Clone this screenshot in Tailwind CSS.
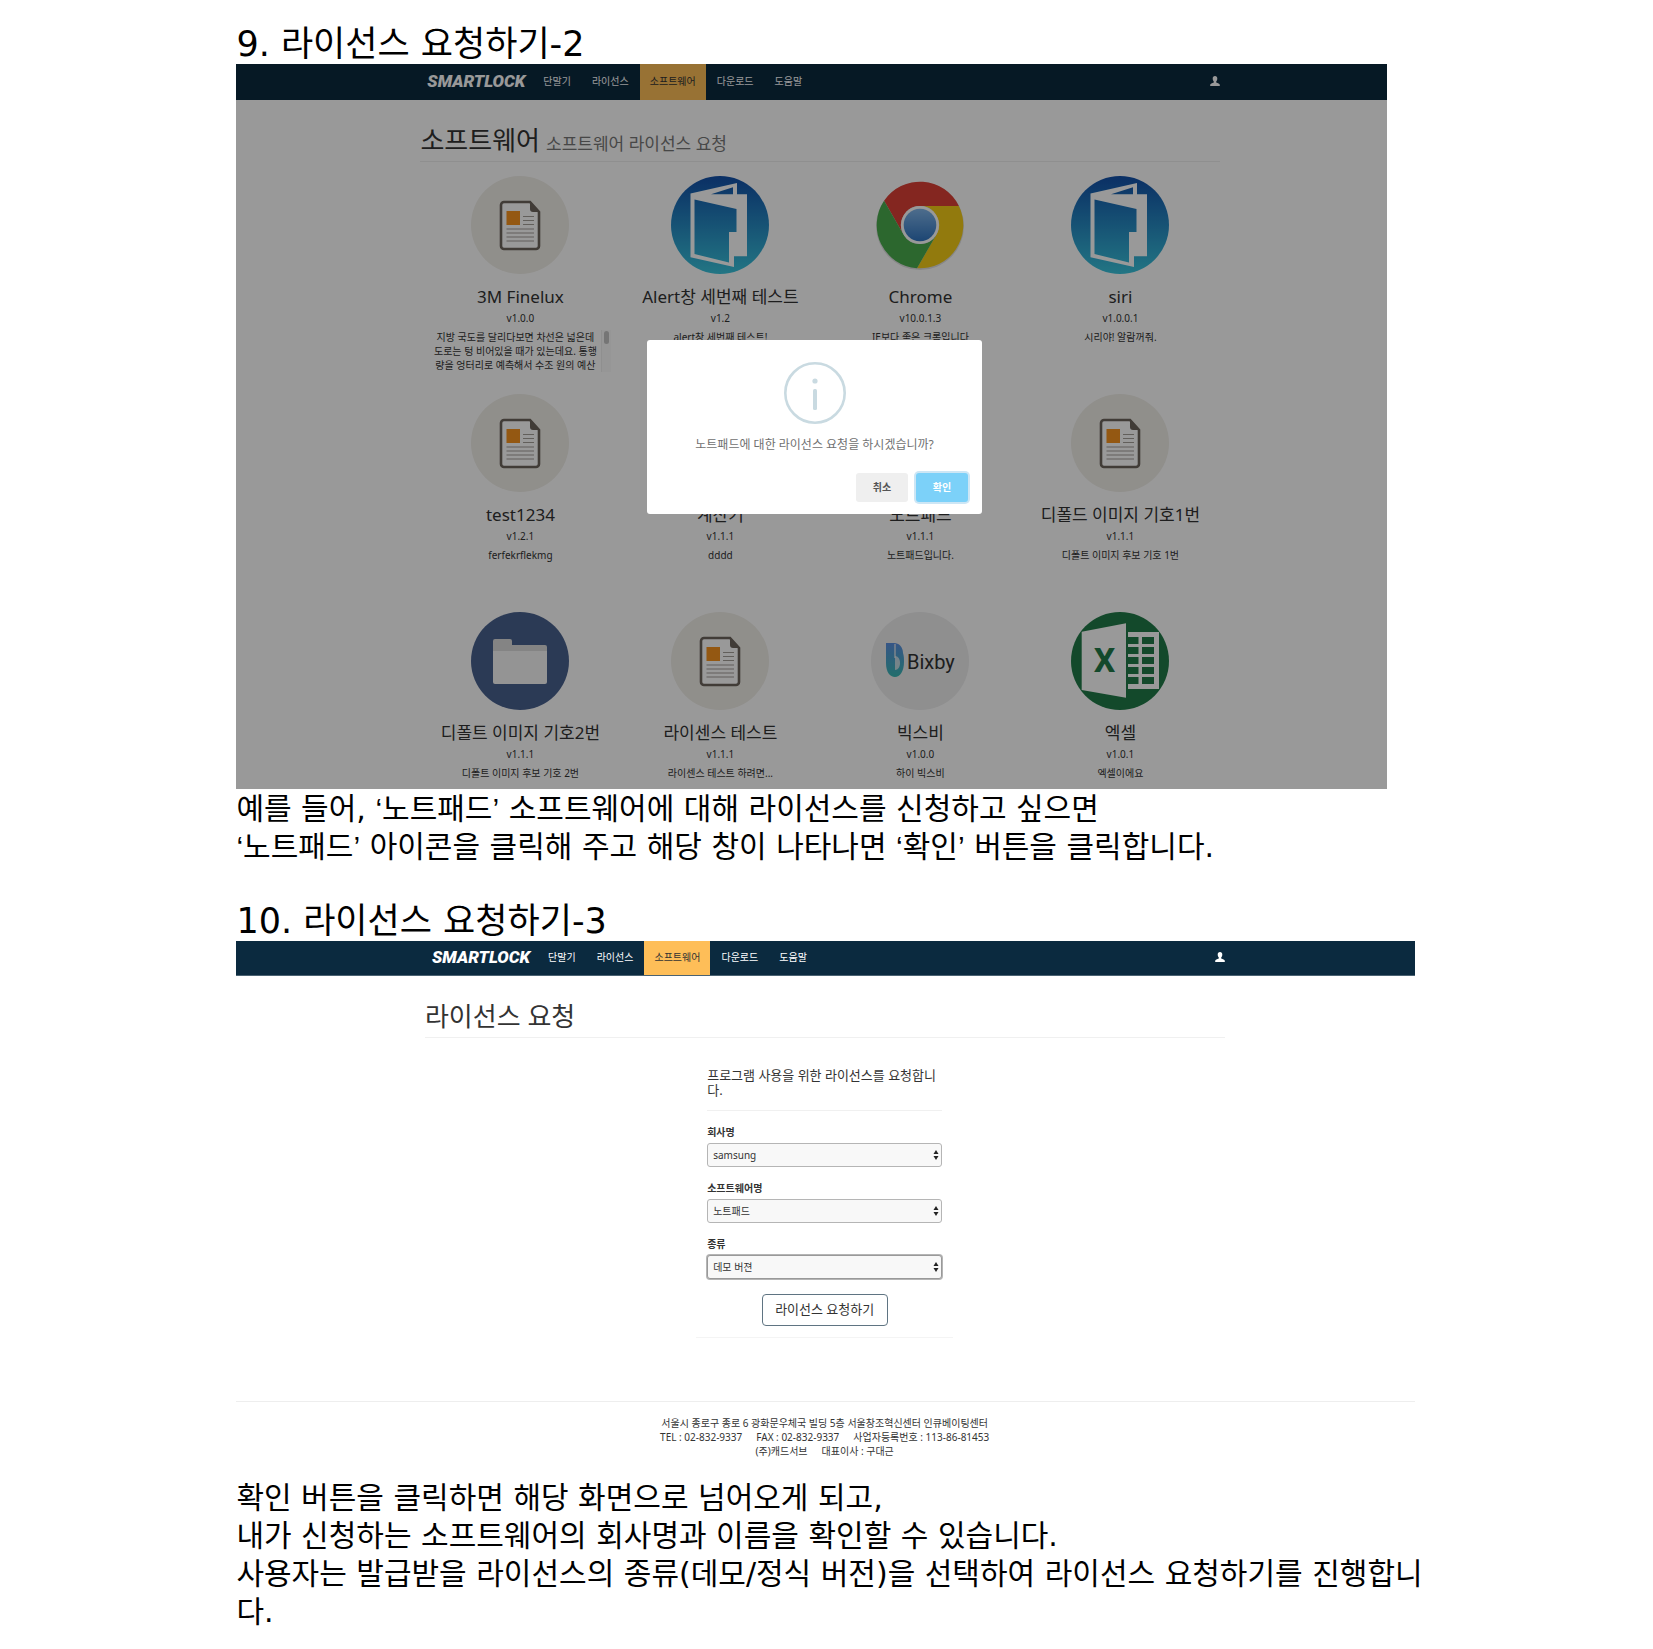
<!DOCTYPE html>
<html lang="ko">
<head>
<meta charset="utf-8">
<meta name="viewport" content="width=device-width, initial-scale=1">
<title>SMARTLOCK 라이선스 요청하기</title>
<script src="https://cdn.jsdelivr.net/npm/@tailwindcss/browser@4"></script>
</head>
<body class="bg-white text-black font-['DejaVu_Sans','Noto_Sans_CJK_KR',sans-serif]">

<svg class="absolute size-0" aria-hidden="true">
  <defs>
    <linearGradient id="bookBg" x1="0" y1="0" x2="0" y2="1"><stop offset="0" stop-color="#124fa8"/><stop offset="1" stop-color="#3ac4dc"/></linearGradient>
    <linearGradient id="bixbyBg" x1="0" y1="0" x2="0" y2="1"><stop offset="0" stop-color="#5c8fe0"/><stop offset="1" stop-color="#38b8b4"/></linearGradient>
    <linearGradient id="blueBall" x1="0" y1="0" x2="0" y2="1"><stop offset="0" stop-color="#82b6ea"/><stop offset="1" stop-color="#2f74c0"/></linearGradient>
  </defs>
  <symbol id="doc" viewBox="0 0 98 98">
    <circle cx="49" cy="49" r="49" fill="#f0eee8"/>
    <path d="M33 26h26l9 10v34a3 3 0 0 1-3 3H33a3 3 0 0 1-3-3V29a3 3 0 0 1 3-3z" fill="#fff" stroke="#6d655d" stroke-width="2.600"/>
    <path d="M59 25l10 11h-7a3 3 0 0 1-3-3z" fill="#6d655d"/>
    <rect x="35.500" y="35" width="13.500" height="14" fill="#f7931e"/>
    <path d="M52 40.500h11M52 44.500h11M52 48.500h11M35.500 53h27.500M35.500 57h27.500M35.500 61h27.500M35.500 65h27.500" stroke="#a39e98" stroke-width="1.200"/>
  </symbol>
  <symbol id="book" viewBox="0 0 98 98">
    <circle cx="49" cy="49" r="49" fill="url(#bookBg)"/>
    <path fill="#fff" fill-rule="evenodd" d="M19.500 17.500L66 7v11.300h10v62H63V91L19.500 81.300zM23.500 23.500V78L58 86.500V56h7.500V33zM40 18.300h22V11.300z"/>
  </symbol>
  <symbol id="chrome" viewBox="0 0 98 98">
    <circle cx="49" cy="50" r="44" fill="#000" opacity=".12"/>
    <path d="M13.100 24.800A43.300 43.300 0 0 1 87.900 30H49A19 19 0 0 0 32.500 58.500z" fill="#dd4036"/>
    <path d="M87.900 30A43.300 43.300 0 0 1 46 92.200L65.500 58.500A19 19 0 0 0 49 30z" fill="#f3cb16"/>
    <path d="M46 92.200A43.300 43.300 0 0 1 13.100 24.800L32.500 58.500A19 19 0 0 0 65.500 58.500z" fill="#4aac4e"/>
    <circle cx="49" cy="49" r="19" fill="#fff"/>
    <circle cx="49" cy="49" r="16.300" fill="url(#blueBall)"/>
  </symbol>
  <symbol id="folder" viewBox="0 0 98 98">
    <circle cx="49" cy="49" r="49" fill="#49618e"/>
    <path d="M24 27h15a2 2 0 0 1 2 2v4h33a2 2 0 0 1 2 2v10H22V29a2 2 0 0 1 2-2z" fill="#dcdcdc"/>
    <path d="M22 39h54v31a2 2 0 0 1-2 2H24a2 2 0 0 1-2-2z" fill="#f7f7f7"/>
  </symbol>
  <symbol id="user" viewBox="0 0 10 10">
    <path d="M5 0c1.500 0 2.300 1 2.300 2.500 0 1.300-.5 2.500-1.100 3v1c1.800.6 3.400 1.300 3.600 2.200V10H.2V8.700C.4 7.800 2 7.100 3.800 6.500v-1c-.6-.5-1.100-1.700-1.100-3C2.700 1 3.500 0 5 0z"/>
  </symbol>
  <symbol id="updown" viewBox="0 0 6 10">
    <path d="M3 0l2.500 4h-5zM3 10L.5 6h5z" fill="#222"/>
  </symbol>
</svg>

<main class="pt-6 pr-[14.4%] pb-4 pl-[14.3%]">

  <h2 class="text-[35px] leading-[40px] whitespace-nowrap">9. 라이선스 요청하기-2</h2>

  <section class="relative w-[97.6%] h-[725px] overflow-hidden bg-white text-[#333] text-[10px] font-['Noto_Sans','Noto_Sans_CJK_KR',sans-serif]">
    <header class="h-9 bg-[#0b2a3f] text-white pl-[16.600%]">
      <nav class="flex h-full max-w-[793px] items-center gap-px">
        <a href="#" class="w-[105px] pb-0.5 font-['Roboto',sans-serif] text-[17px] leading-5 font-black italic">SMARTLOCK</a>
        <a href="#" class="flex h-full items-center px-[10px] pb-0.5">단말기</a>
        <a href="#" class="flex h-full items-center px-[10px] pb-0.5">라이선스</a>
        <a href="#" class="flex h-full items-center bg-[#febe58] px-[10px] pb-0.5 text-[#333]">소프트웨어</a>
        <a href="#" class="flex h-full items-center px-[10px] pb-0.5">다운로드</a>
        <a href="#" class="flex h-full items-center px-[10px] pb-0.5">도움말</a>
        <a href="#" aria-label="내 계정" class="ml-auto pb-0.5"><svg class="size-[10px] fill-white"><use href="#user"/></svg></a>
      </nav>
    </header>

    <div class="ml-[16%] max-w-[800px]">
      <div class="flex items-baseline gap-[6px] border-b border-[#eee] pt-[22px] pb-[3px]">
        <h1 class="text-[26px] leading-9">소프트웨어</h1>
        <p class="text-[17px] leading-6 text-[#777]">소프트웨어 라이선스 요청</p>
      </div>

      <ul class="mt-[14px] grid grid-cols-4 gap-y-[22px] text-center">
        <li class="flex flex-col items-center">
          <svg class="size-[98px]"><use href="#doc"/></svg>
          <h3 class="mt-[10px] text-[17px] leading-[26px]">3M Finelux</h3>
          <p class="leading-4">v1.0.0</p>
          <div class="mt-1 flex h-[42px] w-[182px]">
            <p class="flex-1 leading-[14px] whitespace-nowrap">지방 국도를 달리다보면 차선은 넓은데<br>도로는 텅 비어있을 때가 있는데요. 통행<br>량을 엉터리로 예측해서 수조 원의 예산</p>
            <div class="w-[10px] border-l border-[#eee] bg-[#fafafa] pt-px pl-[2px]"><div class="h-[13px] w-[5px] rounded-full bg-[#c4c4c4]"></div></div>
          </div>
        </li>
        <li class="flex flex-col items-center">
          <svg class="size-[98px]"><use href="#book"/></svg>
          <h3 class="mt-[10px] text-[17px] leading-[26px]">Alert창 세번째 테스트</h3>
          <p class="leading-4">v1.2</p>
          <p class="mt-1 h-[42px] leading-[14px]">alert창 세번째 테스트!</p>
        </li>
        <li class="flex flex-col items-center">
          <svg class="size-[98px]"><use href="#chrome"/></svg>
          <h3 class="mt-[10px] text-[17px] leading-[26px]">Chrome</h3>
          <p class="leading-4">v10.0.1.3</p>
          <p class="mt-1 h-[42px] leading-[14px]">IE보다 좋은 크롬입니다</p>
        </li>
        <li class="flex flex-col items-center">
          <svg class="size-[98px]"><use href="#book"/></svg>
          <h3 class="mt-[10px] text-[17px] leading-[26px]">siri</h3>
          <p class="leading-4">v1.0.0.1</p>
          <p class="mt-1 h-[42px] leading-[14px]">시리야! 알람꺼줘.</p>
        </li>
        <li class="flex flex-col items-center">
          <svg class="size-[98px]"><use href="#doc"/></svg>
          <h3 class="mt-[10px] text-[17px] leading-[26px]">test1234</h3>
          <p class="leading-4">v1.2.1</p>
          <p class="mt-1 h-[42px] leading-[14px]">ferfekrflekmg</p>
        </li>
        <li class="flex flex-col items-center">
          <svg class="size-[98px]"><use href="#doc"/></svg>
          <h3 class="mt-[10px] text-[17px] leading-[26px]">계산기</h3>
          <p class="leading-4">v1.1.1</p>
          <p class="mt-1 h-[42px] leading-[14px]">dddd</p>
        </li>
        <li class="flex flex-col items-center">
          <svg class="size-[98px]"><use href="#doc"/></svg>
          <h3 class="mt-[10px] text-[17px] leading-[26px]">노트패드</h3>
          <p class="leading-4">v1.1.1</p>
          <p class="mt-1 h-[42px] leading-[14px]">노트패드입니다.</p>
        </li>
        <li class="flex flex-col items-center">
          <svg class="size-[98px]"><use href="#doc"/></svg>
          <h3 class="mt-[10px] text-[17px] leading-[26px]">디폴드 이미지 기호1번</h3>
          <p class="leading-4">v1.1.1</p>
          <p class="mt-1 h-[42px] leading-[14px]">디폴트 이미지 후보 기호 1번</p>
        </li>
        <li class="flex flex-col items-center">
          <svg class="size-[98px]"><use href="#folder"/></svg>
          <h3 class="mt-[10px] text-[17px] leading-[26px]">디폴트 이미지 기호2번</h3>
          <p class="leading-4">v1.1.1</p>
          <p class="mt-1 h-[42px] leading-[14px]">디폴트 이미지 후보 기호 2번</p>
        </li>
        <li class="flex flex-col items-center">
          <svg class="size-[98px]"><use href="#doc"/></svg>
          <h3 class="mt-[10px] text-[17px] leading-[26px]">라이센스 테스트</h3>
          <p class="leading-4">v1.1.1</p>
          <p class="mt-1 h-[42px] leading-[14px]">라이센스 테스트 하려면...</p>
        </li>
        <li class="flex flex-col items-center">
          <svg class="size-[98px]" viewBox="0 0 98 98">
            <circle cx="49" cy="49" r="49" fill="#eeeeef"/>
            <path d="M15 31h8c5 0 9 4 9 10 1 3 1 6 1 9 0 9-4 15-9 15s-9-5-9-14z" fill="url(#bixbyBg)"/>
            <path d="M24 44c3 0 5 3 5 7s-2 7-5 7z" fill="#eeeeef" opacity=".75"/>
            <path d="M24 32v14" stroke="#eeeeef" stroke-width="1.200"/>
            <text x="36" y="57" font-family="Roboto, sans-serif" font-size="20" fill="#333">Bixby</text>
          </svg>
          <h3 class="mt-[10px] text-[17px] leading-[26px]">빅스비</h3>
          <p class="leading-4">v1.0.0</p>
          <p class="mt-1 h-[42px] leading-[14px]">하이 빅스비</p>
        </li>
        <li class="flex flex-col items-center">
          <svg class="size-[98px]" viewBox="0 0 98 98">
            <circle cx="49" cy="49" r="49" fill="#217a48"/>
            <path d="M10.700 19.700L55 11.300V85.700L10.700 78z" fill="#fff"/>
            <path d="M57 20h31v57H57z" fill="#fff"/>
            <path d="M57 25h10.500v7H57zM71 25h12v7H71zM57 35h10.500v7H57zM71 35h12v7H71zM57 45h10.500v7H57zM71 45h12v7H71zM57 55h10.500v7H57zM71 55h12v7H71zM57 65h10.500v7H57zM71 65h12v7H71z" fill="#217a48"/>
            <text x="33.500" y="60" text-anchor="middle" font-family="Roboto, sans-serif" font-weight="700" font-size="34" fill="#217a48">X</text>
          </svg>
          <h3 class="mt-[10px] text-[17px] leading-[26px]">엑셀</h3>
          <p class="leading-4">v1.0.1</p>
          <p class="mt-1 h-[42px] leading-[14px]">엑셀이에요</p>
        </li>
      </ul>
    </div>

    <!-- 라이선스 요청 확인 창 -->
    <div class="absolute inset-0 flex items-center justify-center bg-black/40 pl-[6px]">
      <div role="dialog" aria-modal="true" aria-labelledby="ask" class="flex h-[174px] w-[335px] flex-col items-center rounded-[3px] bg-white pt-[22px] pr-[14px] pb-3 pl-[14px]">
        <svg class="size-[62px]" viewBox="0 0 62 62" fill="#c9dae1"><circle cx="31" cy="31" r="29.700" fill="none" stroke="#c9dae1" stroke-width="2.600"/><circle cx="31" cy="19" r="2.600"/><rect x="29" y="27" width="4" height="21" rx="1.500"/></svg>
        <p id="ask" class="mt-3 text-[12px] leading-[18px] text-[#707070]">노트패드에 대한 라이선스 요청을 하시겠습니까?</p>
        <div class="mt-auto flex gap-2 self-end">
          <button type="button" class="h-[29px] w-[52px] rounded-[3px] bg-[#efefef] font-bold text-[#555]">취소</button>
          <button type="button" class="h-[29px] w-[52px] rounded-[3px] bg-[#7cd1f9] font-bold text-white ring-2 ring-[#cde6f5]">확인</button>
        </div>
      </div>
    </div>
  </section>

  <p class="pt-px text-[30px] leading-[38px] whitespace-nowrap">예를 들어, <span class="font-['Liberation_Sans',sans-serif]">‘</span>노트패드<span class="font-['Liberation_Sans',sans-serif]">’</span> 소프트웨어에 대해 라이선스를 신청하고 싶으면<br><span class="font-['Liberation_Sans',sans-serif]">‘</span>노트패드<span class="font-['Liberation_Sans',sans-serif]">’</span> 아이콘을 클릭해 주고 해당 창이 나타나면 <span class="font-['Liberation_Sans',sans-serif]">‘</span>확인<span class="font-['Liberation_Sans',sans-serif]">’</span> 버튼을 클릭합니다.</p>

  <h2 class="mt-[35px] text-[35px] leading-[40px] whitespace-nowrap">10. 라이선스 요청하기-3</h2>

  <section class="h-[538px] bg-white text-[#333] text-[10px] font-['Noto_Sans','Noto_Sans_CJK_KR',sans-serif]">
    <header class="h-[35px] border-b border-[#4a6272] bg-[#0b2a3f] text-white pl-[16.600%]">
      <nav class="flex h-full max-w-[793px] items-center gap-px">
        <a href="#" class="w-[105px] pb-0.5 font-['Roboto',sans-serif] text-[17px] leading-5 font-black italic">SMARTLOCK</a>
        <a href="#" class="flex h-full items-center px-[10px] pb-0.5">단말기</a>
        <a href="#" class="flex h-full items-center px-[10px] pb-0.5">라이선스</a>
        <a href="#" class="flex h-full items-center bg-[#febe58] px-[10px] pb-0.5 text-[#333]">소프트웨어</a>
        <a href="#" class="flex h-full items-center px-[10px] pb-0.5">다운로드</a>
        <a href="#" class="flex h-full items-center px-[10px] pb-0.5">도움말</a>
        <a href="#" aria-label="내 계정" class="ml-auto pb-0.5"><svg class="size-[10px] fill-white"><use href="#user"/></svg></a>
      </nav>
    </header>

    <div class="ml-[16%] max-w-[800px] border-b border-[#f0f0f0] pt-[22px] pb-[3px]">
      <h1 class="text-[26px] leading-9">라이선스 요청</h1>
    </div>

    <div class="pr-[2px]">
      <form class="mx-auto mt-[22px] flex w-[257px] flex-col border-b border-[#f4f4f4] px-[11px] pt-2 pb-[11px]">
        <p class="border-b border-[#f0f0f0] pb-3 text-[13px] leading-[15px] whitespace-nowrap">프로그램 사용을 위한 라이선스를 요청합니<br>다.</p>
        <label for="company" class="mt-[13px] leading-4 font-bold">회사명</label>
        <div class="relative mt-[3px]">
          <select id="company" class="block h-6 w-full appearance-none rounded-[3px] border border-[#b5b5b5] bg-[#f8f8f8] px-[5px]"><option>samsung</option></select>
          <svg class="pointer-events-none absolute top-[7px] right-[3px] h-[10px] w-[6px]"><use href="#updown"/></svg>
        </div>
        <label for="software" class="mt-[13px] leading-4 font-bold">소프트웨어명</label>
        <div class="relative mt-[3px]">
          <select id="software" class="block h-6 w-full appearance-none rounded-[3px] border border-[#b5b5b5] bg-[#f8f8f8] px-[5px]"><option>노트패드</option></select>
          <svg class="pointer-events-none absolute top-[7px] right-[3px] h-[10px] w-[6px]"><use href="#updown"/></svg>
        </div>
        <label for="kind" class="mt-[13px] leading-4 font-bold">종류</label>
        <div class="relative mt-[3px]">
          <select id="kind" class="block h-6 w-full appearance-none rounded-[3px] border border-[#999] bg-[#f8f8f8] px-[5px] ring-1 ring-[#b5b5b5]"><option>데모 버젼</option><option>정식 버젼</option></select>
          <svg class="pointer-events-none absolute top-[7px] right-[3px] h-[10px] w-[6px]"><use href="#updown"/></svg>
        </div>
        <button type="button" class="mt-[15px] h-8 w-[126px] self-center rounded border border-[#5f7482] bg-white text-[13px]">라이선스 요청하기</button>
      </form>
    </div>

    <footer class="mt-[63px] border-t border-[#eee] pt-[14px] pr-[2px] text-center leading-[14px]">
      <p>서울시 종로구 종로 6 광화문우체국 빌딩 5층 서울창조혁신센터 인큐베이팅센터</p>
      <p class="flex justify-center gap-[14px]"><span>TEL : 02-832-9337</span><span>FAX : 02-832-9337</span><span>사업자등록번호 : 113-86-81453</span></p>
      <p class="flex justify-center gap-[14px]"><span>(주)캐드서브</span><span>대표이사 : 구대근</span></p>
    </footer>
  </section>

  <p class="text-[30px] leading-[38px] whitespace-nowrap">확인 버튼을 클릭하면 해당 화면으로 넘어오게 되고,<br>내가 신청하는 소프트웨어의 회사명과 이름을 확인할 수 있습니다.<br>사용자는 발급받을 라이선스의 종류(데모/정식 버전)을 선택하여 라이선스 요청하기를 진행합니<br>다.</p>
</main>
</body>
</html>
